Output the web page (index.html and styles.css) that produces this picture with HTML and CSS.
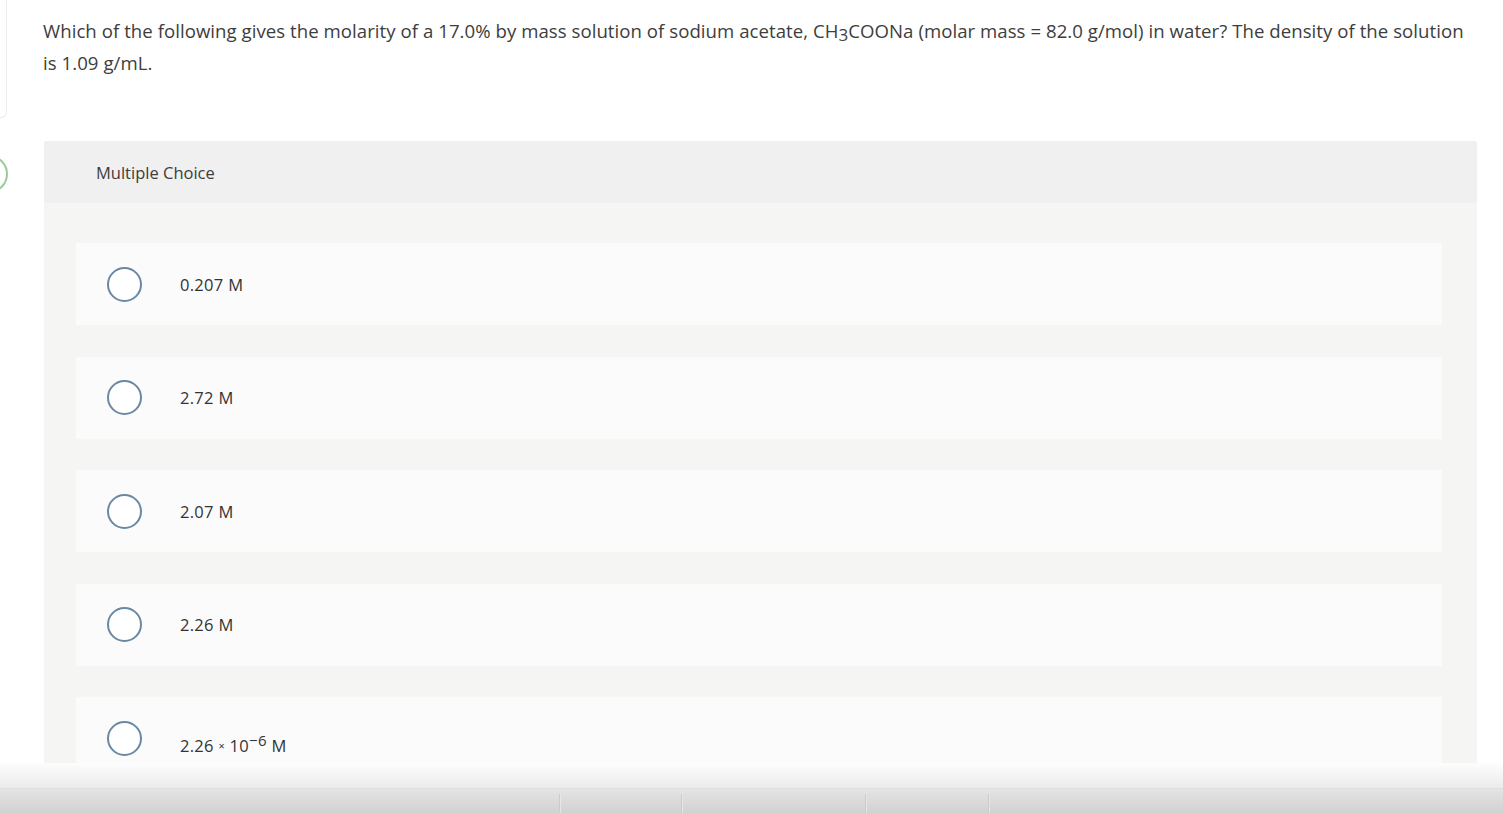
FILE: index.html
```html
<!DOCTYPE html>
<html>
<head>
<meta charset="utf-8">
<link rel="stylesheet" href="styles.css">
</head>
<body>
<div class="page">
  <div class="rail">
    <div class="rail-card"></div>
    <div class="rail-dot"></div>
  </div>
  <main class="main">
    <p class="question">Which of the following gives the molarity of a 17.0% by mass solution of sodium acetate, CH<sub class="sub">3</sub>COONa (molar mass = 82.0 g/mol) in water? The density of the solution is 1.09 g/mL.</p>
    <section class="panel">
      <div class="panel-head">Multiple Choice</div>
      <div class="panel-body">
        <div class="option"><span class="radio"></span><span class="label">0.207 M</span></div>
        <div class="option"><span class="radio"></span><span class="label">2.72 M</span></div>
        <div class="option"><span class="radio"></span><span class="label">2.07 M</span></div>
        <div class="option"><span class="radio"></span><span class="label">2.26 M</span></div>
        <div class="option"><span class="radio"></span><span class="label label-exp">2.26 <span class="times">×</span> 10<sup class="sup">−6</sup> M</span></div>
      </div>
    </section>
  </main>
</div>
<div class="bottom">
  <div class="fade"></div>
  <div class="bar">
    <span class="seg s1"></span>
    <span class="seg s2"></span>
    <span class="seg s3"></span>
    <span class="seg s4"></span>
    <span class="seg s5"></span>
  </div>
</div>
</body>
</html>
```

FILE: styles.css
```css
html, body {
  margin: 0;
  padding: 0;
  background: #ffffff;
  overflow: hidden;
  height: 813px;
}
body {
  font-family: "Open Sans", "Liberation Sans", sans-serif;
  color: #3b3b3b;
}
.page {
  display: flex;
  align-items: flex-start;
}
.rail {
  width: 8px;
  flex: none;
  display: flex;
  flex-direction: column;
}
.rail-card {
  width: 40px;
  margin-left: -33px;
  height: 118px;
  box-sizing: border-box;
  border: 1px solid #ececec;
  border-top: none;
  border-radius: 0 0 6px 0;
}
.rail-dot {
  width: 38px;
  height: 38px;
  margin-left: -30px;
  margin-top: 37px;
  box-sizing: border-box;
  border: 2px solid #9ccb9a;
  border-radius: 50%;
}
.main {
  margin-left: 35px;
  width: 1434px;
  flex: none;
}
.question {
  margin: 15px 0 0 0;
  font-size: 18.6px;
  line-height: 32px;
  color: #3d3d3d;
  width: 1430px;
  letter-spacing: 0.05px;
}
.sub {
  font-size: 17px;
  vertical-align: -3px;
  line-height: 1;
}
.panel {
  margin-top: 62px;
  margin-left: 1px;
  width: 1433px;
  background: #f5f5f4;
  border-radius: 3px 3px 0 0;
}
.panel-head {
  height: 62px;
  background: #f0f0f0;
  display: flex;
  align-items: center;
  padding-left: 52px;
  font-size: 16.5px;
  color: #3c3c3c;
  border-radius: 3px 3px 0 0;
}
.panel-body {
  padding: 40px 35px 40px 32px;
  display: flex;
  flex-direction: column;
  gap: 31.5px;
}
.option {
  height: 82px;
  background: #fbfbfb;
  display: flex;
  align-items: center;
  padding-left: 31px;
}
.radio {
  width: 35px;
  height: 35px;
  box-sizing: border-box;
  border: 2px solid #6a88a3;
  border-radius: 50%;
  background: #ffffff;
  flex: none;
}
.label {
  margin-left: 38px;
  font-size: 16.5px;
  letter-spacing: 0.3px;
  color: #333333;
}
.label-exp {
  padding-top: 14px;
}
.times {
  font-size: 11px;
  vertical-align: 2px;
}
.sup {
  font-size: 15px;
  vertical-align: 6px;
  line-height: 1;
}
.bottom {
  position: fixed;
  left: 0;
  right: 0;
  bottom: 0;
  height: 50px;
  display: flex;
  flex-direction: column;
}
.fade {
  height: 25px;
  background: linear-gradient(#fdfdfd, #ebebeb);
  border-bottom: 1px solid #dedede;
}
.bar {
  flex: 1;
  background: linear-gradient(#e4e4e4, #d1d1d1);
  display: flex;
  padding-top: 5px;
}
.seg {
  height: 100%;
  border-right: 1px solid #cbcbcb;
  box-shadow: 1px 0 0 #e6e6e6;
}
.s1 { width: 559px; }
.s2 { width: 121px; }
.s3 { width: 183px; }
.s4 { width: 122px; }
.s5 { flex: 1; border-right: none; box-shadow: none; }
```
